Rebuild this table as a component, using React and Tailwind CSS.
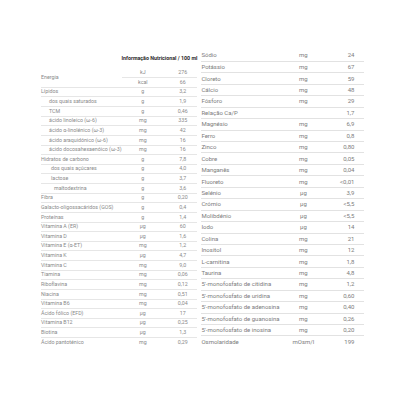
import React from 'react'

const leftRows = [
    ['Lípidos', 'g', '3,2', 0],
    ['dos quais saturados', 'g', '1,9', 1],
    ['TCM', 'g', '0,46', 1],
    ['ácido linoleico (ω-6)', 'mg', '335', 1],
    ['ácido α-linolénico (ω-3)', 'mg', '42', 1],
    ['ácido araquidónico (ω-6)', 'mg', '16', 1],
    ['ácido docosahexaenóico (ω-3)', 'mg', '16', 1],
    ['Hidratos de carbono', 'g', '7,8', 0],
    ['dos quais açúcares', 'g', '4,0', 2],
    ['lactose', 'g', '3,7', 2],
    ['maltodextrina', 'g', '3,6', 3],
    ['Fibra', 'g', '0,20', 0],
    ['Galacto-oligossacáridos (GOS)', 'g', '0,4', 0],
    ['Proteínas', 'g', '1,4', 0],
    ['Vitamina A (ER)', 'µg', '60', 0],
    ['Vitamina D', 'µg', '1,6', 0],
    ['Vitamina E (α-ET)', 'mg', '1,2', 0],
    ['Vitamina K', 'µg', '4,7', 0],
    ['Vitamina C', 'mg', '9,0', 0],
    ['Tiamina', 'mg', '0,06', 0],
    ['Riboflavina', 'mg', '0,12', 0],
    ['Niacina', 'mg', '0,51', 0],
    ['Vitamina B6', 'mg', '0,04', 0],
    ['Ácido fólico (EFD)', 'µg', '17', 0],
    ['Vitamina B12', 'µg', '0,25', 0],
    ['Biotina', 'µg', '1,3', 0],
    ['Ácido pantoténico', 'mg', '0,29', 0],
]

const rightRows = [
    ['Sódio', 'mg', '24'],
    ['Potássio', 'mg', '67'],
    ['Cloreto', 'mg', '59'],
    ['Cálcio', 'mg', '48'],
    ['Fósforo', 'mg', '29'],
    ['Relação Ca/P', '', '1,7'],
    ['Magnésio', 'mg', '6,9'],
    ['Ferro', 'mg', '0,8'],
    ['Zinco', 'mg', '0,80'],
    ['Cobre', 'mg', '0,05'],
    ['Manganês', 'mg', '0,04'],
    ['Fluoreto', 'mg', '<0,01'],
    ['Selénio', 'µg', '3,9'],
    ['Crómio', 'µg', '<5,5'],
    ['Molibdénio', 'µg', '<5,5'],
    ['Iodo', 'µg', '14'],
    ['Colina', 'mg', '21'],
    ['Inositol', 'mg', '12'],
    ['L-carnitina', 'mg', '1,8'],
    ['Taurina', 'mg', '4,8'],
    ["5'-monofosfato de citidina", 'mg', '1,2'],
    ["5'-monofosfato de uridina", 'mg', '0,60'],
    ["5'-monofosfato de adenosina", 'mg', '0,40'],
    ["5'-monofosfato de guanosina", 'mg', '0,26'],
    ["5'-monofosfato de inosina", 'mg', '0,20'],
    ['Osmolaridade', 'mOsm/l', '199'],
]

const indents = ['pl-0', 'pl-[8px]', 'pl-[10px]', 'pl-[13px]']

const App = () => {
  return (
    <div className="w-[400px] h-[400px] bg-white flex items-start font-['Roboto',sans-serif] text-[#8a8a8a]">

        {/* left table */}
        <table className="ml-[41px] mt-[46px] w-[155px] border-collapse text-[5.3px] leading-none">
            <tbody>
                <tr className="h-[22px]">
                    <td></td>
                    <td colSpan={2} className="text-center font-bold text-[5.3px] text-[#2a2a2a] whitespace-nowrap pt-[3px]">
                        Informação Nutricional / 100 ml
                    </td>
                </tr>
                <tr className="h-[9.64px]">
                    <td rowSpan={2} className="border-b border-[#e6e6e6]">Energia</td>
                    <td className="w-[44px] text-center border-b border-[#e6e6e6]">kJ</td>
                    <td className="w-[34px] text-center pl-[4px] border-b border-[#e6e6e6]">276</td>
                </tr>
                <tr className="h-[9.64px]">
                    <td className="text-center border-b border-[#e6e6e6]">kcal</td>
                    <td className="text-center pl-[4px] border-b border-[#e6e6e6]">66</td>
                </tr>
                {leftRows.map(([label, unit, value, indent], i) => {
                    const line = i < leftRows.length - 1 ? 'border-b border-[#e6e6e6]' : ''
                    return (
                        <tr key={label} className="h-[9.64px]">
                            <td className={`${indents[indent]} ${line} whitespace-nowrap`}>{label}</td>
                            <td className={`text-center ${line}`}>{unit}</td>
                            <td className={`text-center pl-[4px] ${line}`}>{value}</td>
                        </tr>
                    )
                })}
            </tbody>
        </table>

        {/* right table */}
        <table className="ml-[4px] mt-[50px] w-[163px] border-collapse text-[6px] leading-none text-[#7c7c7c]">
            <tbody>
                {rightRows.map(([label, unit, value], i) => {
                    const line = i < rightRows.length - 1 ? 'border-b border-[#e2e2e2]' : ''
                    return (
                        <tr key={label} className="h-[11.44px]">
                            <td className={`whitespace-nowrap ${line}`}>{label}</td>
                            <td className={`w-[44px] text-center ${line}`}>{unit}</td>
                            <td className={`w-[39px] text-right pr-[10px] ${line}`}>{value}</td>
                        </tr>
                    )
                })}
            </tbody>
        </table>

    </div>
  )
}

export default App
